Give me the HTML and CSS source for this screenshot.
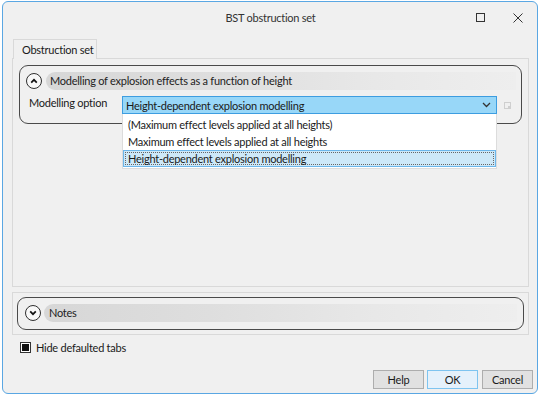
FILE: index.html
```html
<!DOCTYPE html>
<html>
<head>
<meta charset="utf-8">
<link rel="stylesheet" href="styles.css">
</head>
<body>
<div class="window">
  <div class="titlebar">
    <div class="title">BST obstruction set</div>
    <div class="winbtns">
      <svg class="maxbtn" width="10" height="10" viewBox="0 0 10 10"><rect x="0.5" y="0.5" width="8" height="8" fill="none" stroke="#333" stroke-width="1"/></svg>
      <svg class="closebtn" width="10" height="10" viewBox="0 0 10 10"><path d="M0.5 0.5 L9.5 9.5 M9.5 0.5 L0.5 9.5" stroke="#333" stroke-width="1"/></svg>
    </div>
  </div>
  <div class="tabs">
    <div class="tab">Obstruction set</div>
  </div>
  <div class="tabpanel">
    <div class="group">
      <div class="ghead">
        <span class="circle"><svg width="8" height="6" viewBox="0 0 8 6"><path d="M1.2 4.6 L4 1.8 L6.8 4.6" fill="none" stroke="#111" stroke-width="1.7"/></svg></span>
        <div class="gbar">Modelling of explosion effects as a function of height</div>
      </div>
      <div class="grow">
        <div class="label">Modelling option</div>
        <div class="combowrap">
          <div class="combo">
            <span>Height-dependent explosion modelling</span>
            <svg width="9" height="6" viewBox="0 0 9 6"><path d="M1 1 L4.5 4.5 L8 1" fill="none" stroke="#333" stroke-width="1.3"/></svg>
          </div>
          <div class="droplist">
            <div class="item">(Maximum effect levels applied at all heights)</div>
            <div class="item">Maximum effect levels applied at all heights</div>
            <div class="item sel"><span class="focus">Height-dependent explosion modelling</span></div>
          </div>
        </div>
        <svg class="miniicon" width="8" height="8" viewBox="0 0 8 8"><rect x="0.5" y="0.5" width="6" height="6" fill="none" stroke="#cfcfcf"/><rect x="4" y="4" width="3" height="3" fill="#cfcfcf"/></svg>
      </div>
    </div>
  </div>
  <div class="notespanel">
    <div class="group notes">
      <div class="ghead">
        <span class="circle"><svg width="8" height="6" viewBox="0 0 8 6"><path d="M1.2 1.4 L4 4.2 L6.8 1.4" fill="none" stroke="#111" stroke-width="1.7"/></svg></span>
        <div class="gbar">Notes</div>
      </div>
    </div>
  </div>
  <div class="check">
    <span class="box"><span class="fill"></span></span>
    <span>Hide defaulted tabs</span>
  </div>
  <div class="buttons">
    <div class="btn">Help</div>
    <div class="btn ok">OK</div>
    <div class="btn">Cancel</div>
  </div>
</div>
</body>
</html>
```
FILE: styles.css
```css
* { box-sizing: border-box; }
html, body { margin: 0; padding: 0; background: #ffffff; }
body {
  font-family: "Lato", "Open Sans", sans-serif;
  font-size: 11px;
  letter-spacing: -0.25px;
  color: #1a1a1a;
  width: 540px;
  height: 395px;
  overflow: hidden;
}
.window {
  margin: 1px 0 0 2px;
  width: 536px;
  height: 393px;
  border: 1px solid #5aa7e3;
  border-radius: 6px;
  background: #f0f0f0;
  display: flex;
  flex-direction: column;
  padding: 0 8px 0 9px;
}
.titlebar {
  height: 37px;
  position: relative;
  display: flex;
  justify-content: center;
  padding-top: 8px;
}
.title { color: #333; line-height: 16px; height: 16px; }
.winbtns {
  position: absolute;
  top: 11px;
  right: 6px;
  display: flex;
  gap: 27px;
}
.tabs { display: flex; height: 20px; margin-bottom: -1px; position: relative; }
.tab {
  width: 84px;
  margin-left: 1px;
  height: 20px;
  border: 1px solid #d9d9d9;
  border-bottom: none;
  background: #f0f0f0;
  padding-left: 8px;
  line-height: 19px;
}
.tabpanel {
  height: 229px;
  border: 1px solid #d9d9d9;
  padding: 6px;
}
.group {
  border: 1.3px solid #4a4a4a;
  border-radius: 9px;
  height: 59px;
  padding: 6px 5px 0 6px;
}
.ghead { display: flex; align-items: center; height: 18px; }
.circle {
  width: 16px;
  height: 16px;
  border: 1.3px solid #2f2f2f;
  border-radius: 50%;
  display: flex;
  align-items: center;
  justify-content: center;
  background: #f8f8f8;
  flex: none;
}
.gbar {
  flex: 1;
  margin-left: 4px;
  height: 18px;
  border-radius: 9px 0 0 9px;
  background: linear-gradient(to right, #d7d7d7 0%, #dedede 35%, #e8e8e8 70%, #eeeeee 100%);
  padding-left: 4px;
  line-height: 18px;
  color: #222;
}
.grow { display: flex; align-items: flex-start; margin-top: 6px; }
.label { width: 96px; padding-left: 3px; line-height: 14px; }
.combowrap { position: relative; width: 375px; flex: none; }
.combo {
  height: 18px;
  border: 1px solid #3d9de0;
  background: #98d7f8;
  display: flex;
  align-items: center;
  justify-content: space-between;
  padding: 0 5px 0 3px;
}
.droplist {
  position: absolute;
  left: 0;
  top: 18px;
  width: 375px;
  background: #ffffff;
  border: 1px solid #dcdcdc;
  border-top: none;
  padding: 2px 0 1px;
}
.item { height: 17px; line-height: 17px; padding-left: 5px; }
.item.sel {
  background: #cde8f8;
  border: 1px solid #6cb6ea;
  padding: 1px;
  line-height: 13px;
}
.focus {
  display: block;
  border: 1px dotted #666;
  padding-left: 2px;
  height: 13px;
  line-height: 11px;
}
.miniicon { margin: 6px 0 0 7px; }
.notespanel {
  margin-top: 5px;
  height: 43px;
  border: 1px solid #d9d9d9;
  padding: 4px;
}
.group.notes { height: 33px; padding: 6px 6px 0 7px; }
.group.notes .gbar { margin-left: 3px; padding-left: 5px; }
.check { display: flex; align-items: center; margin: 6px 0 0 8px; height: 12px; }
.box {
  width: 11px;
  height: 11px;
  border: 1px solid #333;
  background: #fff;
  display: flex;
  align-items: center;
  justify-content: center;
  margin-right: 5px;
}
.fill { width: 7px; height: 7px; background: #111; }
.buttons {
  display: flex;
  justify-content: flex-end;
  gap: 3px;
  margin-top: auto;
  margin-bottom: 4px;
  margin-right: -4px;
}
.btn {
  width: 51px;
  height: 19px;
  border: 1px solid #adadad;
  background: #e1e1e1;
  text-align: center;
  line-height: 17px;
}
.btn.ok { border-color: #7ec4f0; background: #e5f1fb; margin-right: 1px; }
```
